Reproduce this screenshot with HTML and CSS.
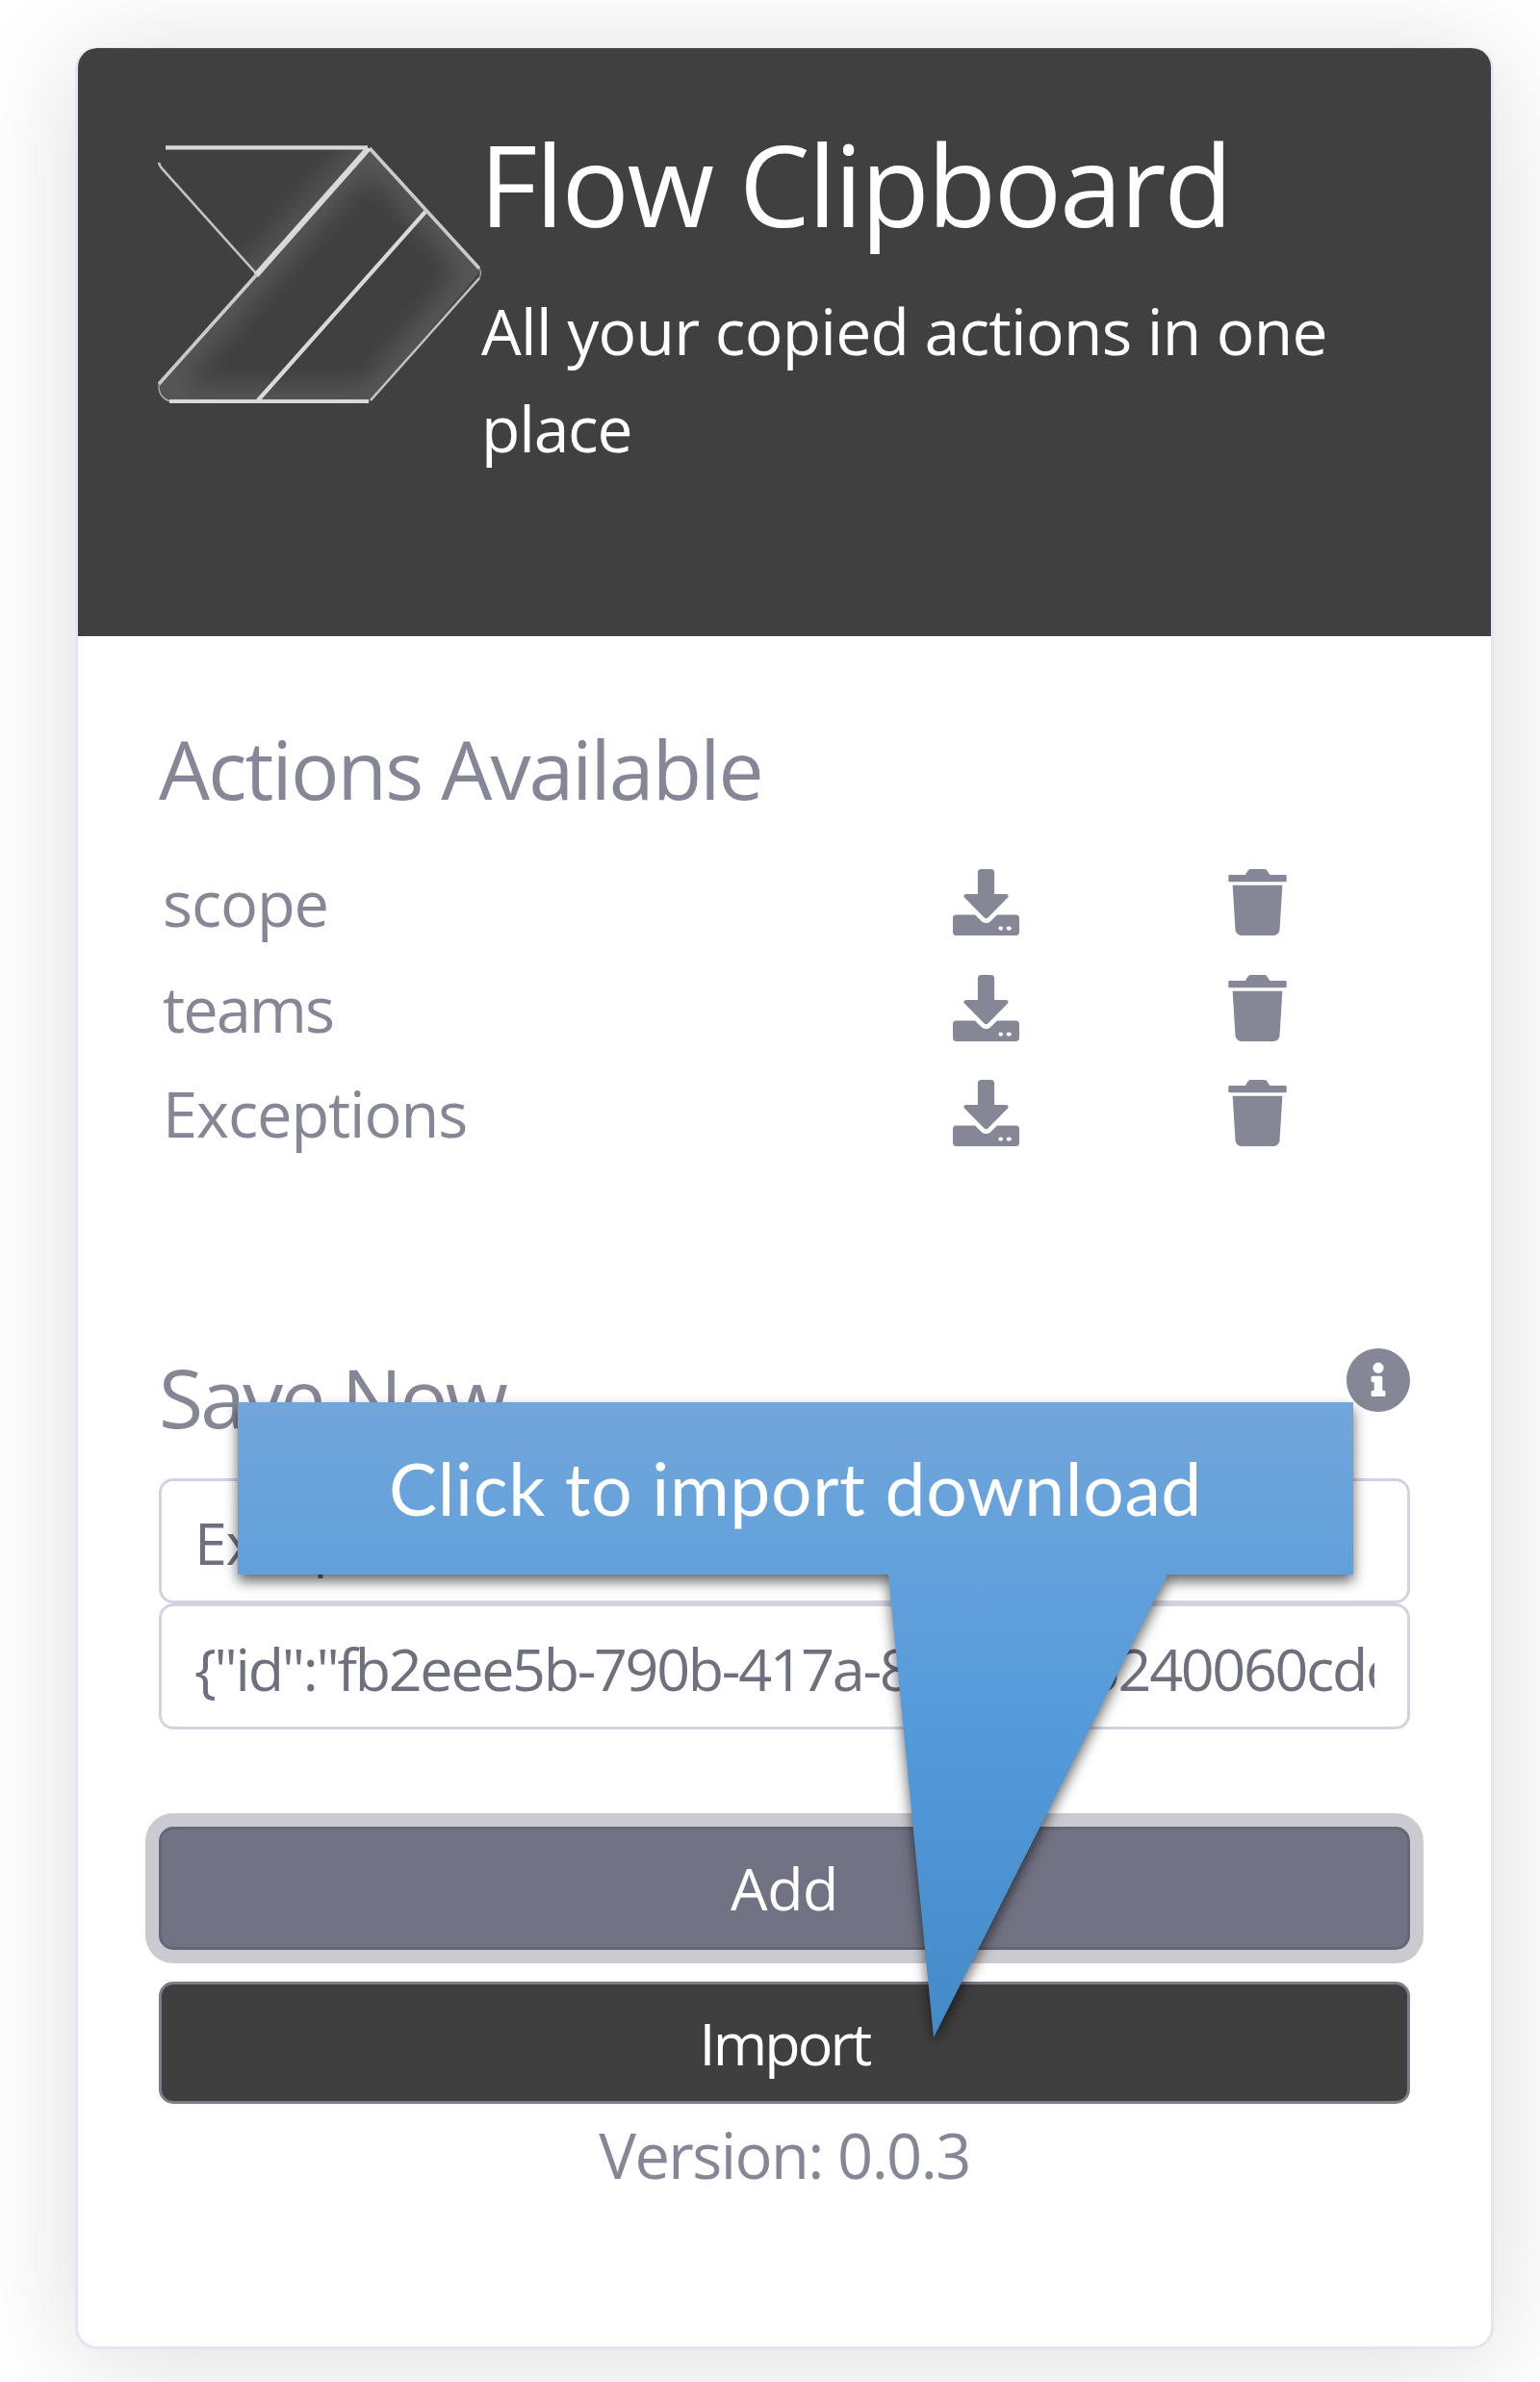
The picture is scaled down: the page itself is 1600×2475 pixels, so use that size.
FILE: index.html
```
<!DOCTYPE html>
<html lang="en">
<head>
<meta charset="utf-8">
<title>Flow Clipboard</title>
<link rel="stylesheet" href="styles.css">
</head>
<body>
<svg class="sprite" aria-hidden="true">
  <symbol id="i-download" viewBox="0 0 512 512"><path d="M216 0h80c13.300 0 24 10.700 24 24v168h87.700c17.800 0 26.700 15.500 14.100 28.100L269.700 374.300c-7.500 7.500-19.800 7.500-27.300 0L90.100 220.100c-12.600-12.600-3.700-28.100 14.100-28.100H192V24c0-13.300 10.700-24 24-24zm296 376v112c0 13.300-10.700 24-24 24H24c-13.300 0-24-10.700-24-24V376c0-13.300 10.700-24 24-24h146.700l49 49c20.100 20.100 52.500 20.100 72.600 0l49-49H488c13.300 0 24 10.700 24 24zm-126 81c0-9-7-16-17-16s-17 7-17 16 7 16 17 16 17-7 17-16zm66 0c0-9-9-16-20-16s-20 7-20 16 9 16 20 16 20-7 20-16z"/></symbol>
  <symbol id="i-trash" viewBox="0 0 448 512"><path d="M53.200 467a48 48 0 0 0 47.900 45h245.800a48 48 0 0 0 47.900-45L416 124H32zM440 45H318L300 14A26 26 0 0 0 278 0H170a26 26 0 0 0-22 14L130 45H8A8 8 0 0 0 0 53v38a8 8 0 0 0 8 8h432a8 8 0 0 0 8-8V53a8 8 0 0 0-8-8z"/></symbol>
  <symbol id="i-info" viewBox="8 8 496 496"><path d="M256 8C119.043 8 8 119.083 8 256c0 136.997 111.043 248 248 248s248-111.003 248-248C504 119.083 392.957 8 256 8zm0 110c23.196 0 42 18.804 42 42s-18.804 42-42 42-42-18.804-42-42 18.804-42 42-42zm56 254c0 6.627-5.373 12-12 12h-88c-6.627 0-12-5.373-12-12v-24c0-6.627 5.373-12 12-12h12v-64h-12c-6.627 0-12-5.373-12-12v-24c0-6.627 5.373-12 12-12h64c6.627 0 12 5.373 12 12v100h12c6.627 0 12 5.373 12 12v24z"/></symbol>
</svg>

<main class="card">
  <header class="card-header">
    <svg class="logo" viewBox="162 145 340 280">
      <defs>
        <clipPath id="body-clip"><path d="M383 153L499 282L384 418H175Q165 414 164 402Z"/></clipPath>
        <clipPath id="flap-clip"><path d="M170 153H383L266 285L164 169Z"/></clipPath>
        <filter id="soft" x="-20%" y="-20%" width="140%" height="140%"><feGaussianBlur stdDeviation="13"/></filter>
      </defs>
      <g clip-path="url(#body-clip)"><path class="glow" d="M383 153L499 282L384 418H175Q165 414 164 402Z" filter="url(#soft)"/></g>
      <g clip-path="url(#flap-clip)"><path class="glow glow-flap" d="M395 140L250 303" filter="url(#soft)"/></g>
      <g class="edges">
        <path class="e4" d="M172 153.300H382"/>
        <path class="e2" d="M165 169Q166 173 169 176L266 284"/>
        <path class="e5" d="M383 154L266 286"/>
        <path class="e3" d="M266 286L165 399"/>
        <path class="e1" d="M165 399Q164 413 177 417"/>
        <path class="e4" d="M176 417H383"/>
        <path class="e3" d="M384 154L498 279"/>
        <path class="e1" d="M498 279Q501 283 498 289"/>
        <path class="e2" d="M498 289L385 416"/>
        <path class="e4" d="M442 220L268 416"/>
      </g>
    </svg>
    <div class="brand">
      <h1 class="title">Flow Clipboard</h1>
      <p class="tagline">All your copied actions in one <span class="word">place</span></p>
    </div>
  </header>

  <div class="card-body">
    <h2 class="heading">Actions Available</h2>
    <ul class="actions">
      <li class="action"><span class="name">scope</span><svg class="ic-dl"><use href="#i-download"/></svg><svg class="ic-trash"><use href="#i-trash"/></svg></li>
      <li class="action"><span class="name tight">teams</span><svg class="ic-dl"><use href="#i-download"/></svg><svg class="ic-trash"><use href="#i-trash"/></svg></li>
      <li class="action last"><span class="name">Exceptions</span><svg class="ic-dl"><use href="#i-download"/></svg><svg class="ic-trash"><use href="#i-trash"/></svg></li>
    </ul>

    <div class="save-row">
      <h2 class="heading save">Save Now</h2>
      <svg class="ic-info"><use href="#i-info"/></svg>
    </div>
    <div class="field"><span class="value">Exceptions</span></div>
    <div class="field second"><span class="value json">{"id":"fb2eee5b-790b-417a-8341-92b240060cdc</span></div>

    <button class="btn btn-add" type="button">Add</button>
    <button class="btn btn-import" type="button"><span class="import-label">Import</span></button>
    <p class="version">Version: 0.0.3</p>
  </div>

  <div class="callout">
    <svg class="callout-shape" viewBox="0 0 1159 660">
      <defs><linearGradient id="blue" x1="0" y1="0" x2="0" y2="1"><stop offset="0" stop-color="#71a6db"/><stop offset=".5" stop-color="#559bdb"/><stop offset="1" stop-color="#438ac9"/></linearGradient></defs>
      <path fill="url(#blue)" d="M0 0H1159V179H966L723 660L676 179H0Z"/>
    </svg>
    <span class="callout-text">Click to import download</span>
  </div>
</main>
</body>
</html>
```
FILE: styles.css
```
* { box-sizing: border-box; }
body {
  margin: 0;
  height: 2475px;
  padding: 49px 48px 34px 78px;
  background: #fff;
  color: #858796;
  font-family: "Open Sans", "Noto Sans", sans-serif;
  font-size: 65px;
  overflow: hidden;
}
h1, h2, p, ul { margin: 0; padding: 0; font-weight: 400; }
.sprite { display: none; }

.card {
  position: relative;
  width: 1474px;
  height: 2392px;
  border: 3px solid #e3e6f0;
  border-top-width: 1px;
  border-radius: 23px;
  background: #fff;
  box-shadow: 0 10px 118px rgba(0, 0, 0, .14);
}
.card-header {
  display: flex;
  align-items: flex-start;
  height: 611px;
  padding: 79px 84px 0 81px;
  background: #404040;
  border-radius: 20px 20px 0 0;
  color: #fff;
}
.logo { flex: none; width: 340px; height: 280px; margin-top: 16px; }
.glow { fill: none; stroke: #fff; stroke-width: 34; opacity: .12; }
.glow-flap { opacity: .1; }
.edges { fill: none; stroke: #d9d9d9; }
.e1 { stroke-width: 1.200; opacity: .7; }
.e2 { stroke-width: 2.600; opacity: .85; }
.e3 { stroke-width: 3.600; opacity: .9; }
.e4 { stroke-width: 4.200; }
.e5 { stroke-width: 6; }

.brand { flex: 1; padding-top: 2px; }
.title { margin-left: -4px; font-size: 117px; line-height: 120px; letter-spacing: -2.250px; }
.tagline { margin: 42px 0 0 -2px; font-size: 66px; line-height: 100.500px; letter-spacing: -.75px; }
.word { letter-spacing: -1.200px; }

.card-body { display: flex; flex-direction: column; padding: 87px 84px 0; }
.heading { font-size: 84px; line-height: 102px; letter-spacing: -1.900px; }
.heading.save { letter-spacing: -2.800px; }

.actions { list-style: none; margin-top: 32px; padding-left: 4px; }
.action { display: grid; grid-template-columns: 821px 286px 1fr; align-items: center; height: 110px; fill: #858796; }
.action.last { height: 106px; }
.name { padding-top: 2px; line-height: 106px; letter-spacing: -1.100px; }
.name.tight { letter-spacing: -2px; }
.ic-dl { width: 69px; height: 69px; }
.ic-trash { width: 61px; height: 69px; }

.save-row { display: flex; justify-content: space-between; align-items: flex-start; height: 102px; margin-top: 193px; }
.ic-info { width: 66px; height: 66px; fill: #858796; }

.field {
  height: 130px;
  padding: 4px 34px 0;
  border: 3px solid #d1d3e2;
  border-radius: 15px;
  background: #fff;
  color: #6e707e;
  font-size: 61px;
  line-height: 120px;
}
.save-row + .field { margin-top: 33px; }
.field.second { height: 131px; padding-top: 5px; }
.value { display: block; overflow: hidden; white-space: nowrap; letter-spacing: -1.500px; }
.value.json { letter-spacing: -2.300px; }

.btn {
  display: block;
  width: 100%;
  height: 128px;
  padding: 0;
  border: 3px solid #656776;
  border-radius: 15px;
  color: #fff;
  font: 400 61px/122px "Open Sans", "Noto Sans", sans-serif;
  letter-spacing: -.450px;
}
.btn-add { margin-top: 101px; background: #717384; box-shadow: 0 0 0 14px #cacbd1; }
.btn-import { height: 127px; line-height: 121px; margin-top: 33px; background: #3f3f3f; border-color: #7b7d8b; }
.import-label { letter-spacing: -2.890px; }
.version { margin-top: 4px; line-height: 98px; text-align: center; letter-spacing: -1.590px; }

.callout {
  position: absolute;
  left: 166px;
  top: 1407px;
  width: 1159px;
  height: 179px;
  display: flex;
  align-items: center;
  justify-content: center;
  color: #fff;
  font-family: Lato, "Open Sans", sans-serif;
  font-size: 75px;
}
.callout-shape {
  position: absolute;
  left: 0;
  top: 0;
  width: 1159px;
  height: 660px;
  overflow: visible;
  filter: drop-shadow(0 7px 7px rgba(0, 0, 0, .6));
}
.callout-text { position: relative; line-height: 175px; padding-bottom: 1px; letter-spacing: .660px; white-space: nowrap; }
```
